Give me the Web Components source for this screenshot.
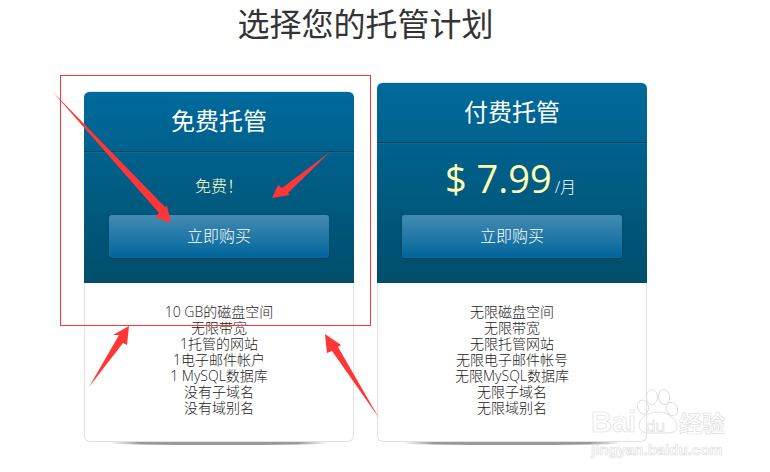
<!DOCTYPE html>
<html lang="zh">
<head>
<meta charset="utf-8">
<title>选择您的托管计划</title>
<style>
  html, body { margin: 0; background: #fff; }
  body { font-family: "Open Sans", "Noto Sans CJK SC", sans-serif; color: #333; }
</style>
</head>
<body>
<hosting-page heading="选择您的托管计划">
  <plan-card name="免费托管">
    <plan-price slot="price" label="免费！"></plan-price>
    <li>10 GB的磁盘空间</li>
    <li>无限带宽</li>
    <li>1托管的网站</li>
    <li>1电子邮件帐户</li>
    <li>1 MySQL数据库</li>
    <li>没有子域名</li>
    <li>没有域别名</li>
  </plan-card>
  <plan-card name="付费托管">
    <plan-price slot="price" amount="$ 7.99" unit="/月"></plan-price>
    <li>无限磁盘空间</li>
    <li>无限带宽</li>
    <li>无限托管网站</li>
    <li>无限电子邮件帐号</li>
    <li>无限MySQL数据库</li>
    <li>无限子域名</li>
    <li>无限域别名</li>
  </plan-card>
</hosting-page>
<markup-layer></markup-layer>
<baidu-mark></baidu-mark>

<script>
  const CJK = '"Open Sans", "Noto Sans CJK SC", sans-serif';

  customElements.define(
    "hosting-page",
    class HostingPage extends HTMLElement {
      constructor() {
        super();
        this.attachShadow({ mode: "open" });
      }

      connectedCallback() {
        this.shadowRoot.innerHTML = `
          <style>
            :host { display: block; width: 563px; padding-left: 84px; font-family: ${CJK}; }
            h1 {
              height: 82px;
              margin: 0;
              padding-top: 4px;
              box-sizing: border-box;
              font-size: 32px;
              line-height: 40px;
              font-weight: 400;
              text-align: center;
              color: #333;
            }
            .plans { display: flex; align-items: flex-end; gap: 23px; }
          </style>
          <h1>${this.getAttribute("heading")}</h1>
          <div class="plans"><slot></slot></div>
        `;
      }
    }
  );

  customElements.define(
    "plan-card",
    class PlanCard extends HTMLElement {
      constructor() {
        super();
        this.attachShadow({ mode: "open" });
      }

      connectedCallback() {
        this.shadowRoot.innerHTML = `
          <style>
            :host { display: block; width: 270px; }
            .top {
              border-top: 1px solid #dfe5e9;
              border-radius: 6px 6px 0 0;
              color: #fff;
              background: linear-gradient(#006a9c, #004e6b);
              text-align: center;
            }
            h2 {
              height: 59px;
              margin: 0;
              font-size: 24px;
              line-height: 58px;
              font-weight: 400;
              border-bottom: 1px solid #004662;
              box-shadow: 0 1px 0 rgba(255, 255, 255, 0.06);
            }
            .action { padding: 0 25px 25px; }
            ul {
              list-style: none;
              margin: 0;
              padding: 21px 0 25px;
              border: 1px solid #e2e2e2;
              border-top: 0;
              border-radius: 0 0 6px 6px;
              font-size: 14px;
              line-height: 16px;
              font-weight: 300;
              text-align: center;
              color: #222;
            }
            .shadow {
              height: 3px;
              margin: 0 26px;
              border-radius: 0 0 50% 50%;
              background: linear-gradient(90deg, rgba(150,150,150,0), #999 14%, #999 86%, rgba(150,150,150,0));
            }
          </style>
          <div class="top">
            <h2>${this.getAttribute("name")}</h2>
            <slot name="price"></slot>
            <div class="action"><buy-button>立即购买</buy-button></div>
          </div>
          <ul><slot></slot></ul>
          <div class="shadow"></div>
        `;
      }
    }
  );

  customElements.define(
    "plan-price",
    class PlanPrice extends HTMLElement {
      constructor() {
        super();
        this.attachShadow({ mode: "open" });
      }

      connectedCallback() {
        const label = this.getAttribute("label");
        const amount = this.getAttribute("amount");
        const unit = this.getAttribute("unit");
        this.shadowRoot.innerHTML = `
          <style>
            :host { display: block; color: #ffffb4; text-align: center; }
            .label { padding: 22px 0 17px; font-size: 16px; line-height: 24px; font-weight: 300; color: #ffffc8; }
            .paid { height: 72px; padding: 10px 3px 0 0; box-sizing: border-box; font-size: 38px; line-height: 50px; }
            .unit { margin-left: 3px; font-size: 16px; font-weight: 300; color: #fff; }
          </style>
          ${
            label
              ? `<div class="label">${label}</div>`
              : `<div class="paid">${amount}<span class="unit">${unit}</span></div>`
          }
        `;
      }
    }
  );

  customElements.define(
    "buy-button",
    class BuyButton extends HTMLElement {
      constructor() {
        super();
        this.attachShadow({ mode: "open" });
      }

      connectedCallback() {
        this.shadowRoot.innerHTML = `
          <style>
            :host { display: block; }
            button {
              display: block;
              width: 100%;
              height: 43px;
              padding: 0;
              border: 0;
              border-radius: 3px;
              background: linear-gradient(#448bb3, #00669b);
              box-shadow: 0 1px 2px rgba(0, 40, 60, 0.5);
              color: #fff;
              font: 300 16px/43px ${CJK};
            }
          </style>
          <button><slot></slot></button>
        `;
      }
    }
  );

  // hand drawn annotations over the screenshot
  customElements.define(
    "markup-layer",
    class MarkupLayer extends HTMLElement {
      constructor() {
        super();
        this.attachShadow({ mode: "open" });
      }

      connectedCallback() {
        this.shadowRoot.innerHTML = `
          <style>
            :host { position: absolute; left: 0; top: 0; width: 770px; height: 472px; pointer-events: none; }
            svg { display: block; }
          </style>
          <svg width="770" height="472" viewBox="0 0 770 472">
            <rect x="60.5" y="75.5" width="310" height="250" fill="none" stroke="#f33" stroke-width="1"/>
            <g fill="#ff3636">
              <polygon points="52,91 165,207 167,206 171,223 155,217 159,213"/>
              <polygon points="330,152 288,193 290,195 272,198 278,185 282,188"/>
              <polygon points="89,387 119,335 113,335 129,326 127,345 123,343"/>
              <polygon points="379,418 338,347 341,345 325,334 327,353 332,351"/>
            </g>
          </svg>
        `;
      }
    }
  );

  customElements.define(
    "baidu-mark",
    class BaiduMark extends HTMLElement {
      constructor() {
        super();
        this.attachShadow({ mode: "open" });
      }

      connectedCallback() {
        this.shadowRoot.innerHTML = `
          <style>
            :host {
              position: absolute;
              left: 591px;
              top: 388px;
              width: 150px;
              height: 70px;
              pointer-events: none;
              font-family: "Liberation Sans", "Noto Sans CJK SC", sans-serif;
              color: transparent;
              -webkit-text-stroke: 0.7px #e0e0e0;
            }
            svg { position: absolute; left: 0; top: 0; }
            .row { display: flex; align-items: baseline; height: 53px; padding-top: 20px; box-sizing: border-box; }
            .bai { width: 55px; font-size: 29px; line-height: 29px; font-weight: 700; }
            .du { width: 33px; font-size: 17px; line-height: 29px; }
            .jy { font-size: 23px; line-height: 29px; font-weight: 700; }
            .url { font-size: 15px; line-height: 18px; font-weight: 700; }
          </style>
          <svg width="150" height="60" viewBox="0 0 150 60" fill="none" stroke="#e0e0e0" stroke-width="1">
            <ellipse cx="52" cy="19" rx="5.500" ry="7" transform="rotate(-15 52 19)"/>
            <ellipse cx="61" cy="9" rx="5.500" ry="7.500"/>
            <ellipse cx="73" cy="9" rx="5.500" ry="7.500" transform="rotate(-10 73 9)"/>
            <ellipse cx="81" cy="21" rx="5.500" ry="7" transform="rotate(-25 81 21)"/>
            <path d="M48 37c0-6 8-13 19-13s19 8 19 14c0 5-4 7-9 7H57c-5 0-9-3-9-8z"/>
          </svg>
          <div class="row">
            <span class="bai">Bai</span><span class="du">du</span><span class="jy">经验</span>
          </div>
          <div class="url">jingyan.baidu.com</div>
        `;
      }
    }
  );
</script>
</body>
</html>
